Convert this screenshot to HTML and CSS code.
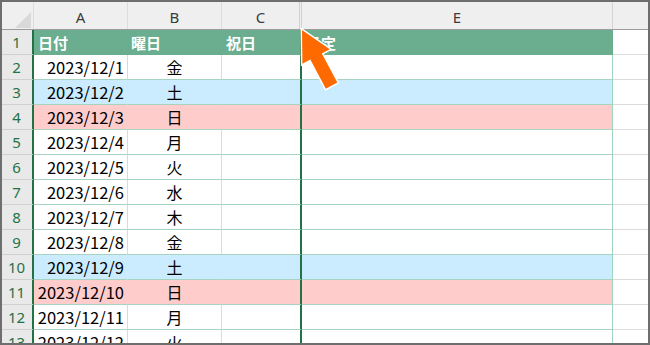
FILE: index.html
```html
<!DOCTYPE html>
<html lang="ja">
<head>
<meta charset="utf-8">
<title>Sheet</title>
<link rel="stylesheet" href="styles.css">
</head>
<body>
<div class="frame">
  <div class="row colhead">
    <div class="corner"><span class="tri"></span></div>
    <div class="ch">A</div>
    <div class="ch">B</div>
    <div class="ch ch-c">C</div>
    <div class="ch ch-e">E</div>
    <div class="ch ch-f"></div>
  </div>
  <div class="row head">
    <div class="rh">1</div>
    <div class="c ca">日付</div>
    <div class="c cb">曜日</div>
    <div class="c cc">祝日</div>
    <div class="c ce">予定</div>
    <div class="c cf"></div>
  </div>
  <div class="row"><div class="rh">2</div><div class="c ca">2023/12/1</div><div class="c cb">金</div><div class="c cc"></div><div class="c ce"></div><div class="c cf"></div></div>
  <div class="row sat"><div class="rh">3</div><div class="c ca">2023/12/2</div><div class="c cb">土</div><div class="c cc"></div><div class="c ce"></div><div class="c cf"></div></div>
  <div class="row sun"><div class="rh">4</div><div class="c ca">2023/12/3</div><div class="c cb">日</div><div class="c cc"></div><div class="c ce"></div><div class="c cf"></div></div>
  <div class="row"><div class="rh">5</div><div class="c ca">2023/12/4</div><div class="c cb">月</div><div class="c cc"></div><div class="c ce"></div><div class="c cf"></div></div>
  <div class="row"><div class="rh">6</div><div class="c ca">2023/12/5</div><div class="c cb">火</div><div class="c cc"></div><div class="c ce"></div><div class="c cf"></div></div>
  <div class="row"><div class="rh">7</div><div class="c ca">2023/12/6</div><div class="c cb">水</div><div class="c cc"></div><div class="c ce"></div><div class="c cf"></div></div>
  <div class="row"><div class="rh">8</div><div class="c ca">2023/12/7</div><div class="c cb">木</div><div class="c cc"></div><div class="c ce"></div><div class="c cf"></div></div>
  <div class="row"><div class="rh">9</div><div class="c ca">2023/12/8</div><div class="c cb">金</div><div class="c cc"></div><div class="c ce"></div><div class="c cf"></div></div>
  <div class="row sat"><div class="rh">10</div><div class="c ca">2023/12/9</div><div class="c cb">土</div><div class="c cc"></div><div class="c ce"></div><div class="c cf"></div></div>
  <div class="row sun"><div class="rh">11</div><div class="c ca">2023/12/10</div><div class="c cb">日</div><div class="c cc"></div><div class="c ce"></div><div class="c cf"></div></div>
  <div class="row"><div class="rh">12</div><div class="c ca">2023/12/11</div><div class="c cb">月</div><div class="c cc"></div><div class="c ce"></div><div class="c cf"></div></div>
  <div class="row"><div class="rh">13</div><div class="c ca">2023/12/12</div><div class="c cb">火</div><div class="c cc"></div><div class="c ce"></div><div class="c cf"></div></div>

  <svg class="arrow" width="60" height="80" viewBox="280 20 60 80" aria-hidden="true">
    <polygon transform="translate(302 30) rotate(-28)"
      points="0,0 15.5,30 6.5,30 6.5,63 -6.5,63 -6.5,30 -15.5,30"
      fill="#ff6a00" stroke="#ffffff" stroke-width="3" stroke-linejoin="miter" paint-order="stroke"/>
  </svg>
</div>
</body>
</html>
```

FILE: styles.css
```css
* { box-sizing: border-box; }
html, body { margin: 0; padding: 0; background: #ffffff; }

.frame {
  position: relative;
  width: 650px;
  height: 345px;
  border: 2px solid #6e6e6e;
  overflow: hidden;
  background: #ffffff;
  font-family: "Noto Sans CJK JP", "Noto Sans", sans-serif;
}

.row {
  display: grid;
  grid-template-columns: 32px 94px 94px 80px 311px 35px;
  height: 25px;
}

/* column header */
.colhead {
  height: 28px;
  background: #efefef;
  border-bottom: 1px solid #9c9c9c;
}
.corner {
  display: flex;
  align-items: flex-end;
  justify-content: flex-end;
  padding: 0 2px 1px 0;
  border-right: 1px solid #dcdcdc;
}
.tri {
  width: 16px;
  height: 16px;
  background: #d9d9d9;
  clip-path: polygon(100% 0, 100% 100%, 0 100%);
}
.ch {
  display: flex;
  align-items: center;
  justify-content: center;
  font-family: "Noto Sans", "Liberation Sans", sans-serif;
  font-size: 15px;
  color: #3c3c3c;
  border-right: 1px solid #dcdcdc;
  padding-top: 2px;
}
.ch-c { border-right: 3px double #d0d0d0; }
.ch-e { border-right: 1px solid #d4d4d4; }
.ch-f { border-right: none; }

/* row header */
.rh {
  display: flex;
  align-items: center;
  justify-content: center;
  background: #e9e9e9;
  border-right: 2px solid #217346;
  border-bottom: 1px solid #d0d0d0;
  font-family: "Noto Sans", "Liberation Sans", sans-serif;
  font-size: 15px;
  color: #1f7246;
  padding-right: 1px;
}

/* cells */
.c {
  display: flex;
  align-items: center;
  font-size: 16px;
  color: #000000;
  white-space: nowrap;
  border-bottom: 1px solid #a7d4c1;
  background: #ffffff;
}
.ca { justify-content: flex-end; padding-right: 3px; border-right: 1px solid #dadada; font-size: 16.5px; }
.cb { justify-content: center; border-right: 1px solid #dadada; }
.cc { border-right: 2px solid #217346; }
.ce { border-right: 1px solid #9fd4bf; }
.cf { border-bottom-color: #dcdcdc; }

.head .c {
  background: #6aad8f;
  color: #ffffff;
  font-weight: 700;
  font-size: 15px;
  justify-content: flex-start;
  padding-left: 4px;
  border-bottom-color: #6aad8f;
}
.head .ca, .head .cb { border-right-color: #6aad8f; }
.head .cb { padding-left: 3px; }
.head .ce { border-right-color: #6aad8f; padding-left: 4px; }
.head .cc { border-right-color: #217346; }
.head .cf { background: #ffffff; border-bottom-color: #dcdcdc; }

.sat .ca, .sat .cb, .sat .cc, .sat .ce { background: #cbecfe; }
.sat .ca, .sat .cb { border-right-color: #cbecfe; }
.sun .ca, .sun .cb, .sun .cc, .sun .ce { background: #ffcccc; }
.sun .ca, .sun .cb { border-right-color: #ffcccc; }

.arrow {
  position: absolute;
  left: 278px;
  top: 18px;
  overflow: visible;
}
```
